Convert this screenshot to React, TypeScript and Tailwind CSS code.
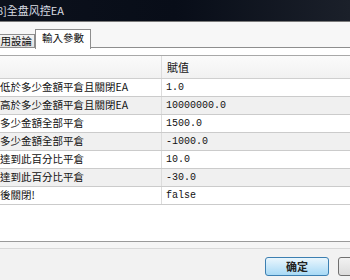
import React from "react";

const rows: { name: string; value: string }[] = [
  { name: "低於多少金額平倉且關閉EA", value: "1.0" },
  { name: "高於多少金額平倉且關閉EA", value: "10000000.0" },
  { name: "多少金額全部平倉", value: "1500.0" },
  { name: "多少金額全部平倉", value: "-1000.0" },
  { name: "達到此百分比平倉", value: "10.0" },
  { name: "達到此百分比平倉", value: "-30.0" },
  { name: "後關閉!", value: "false" },
];

export default function App() {
  return (
    <div
      className="w-[350px] h-[280px] overflow-hidden flex flex-col bg-[#f0f0f0] text-[#111]"
      style={{ fontFamily: '"Noto Sans CJK TC", "Noto Sans CJK SC", sans-serif' }}
    >
      {/* title bar */}
      <div className="h-[22px] shrink-0 flex items-center bg-gradient-to-r from-[#0c111c] via-[#080d18] to-[#1b202a] border-b border-[#7a7a7a]">
        <span className="ml-[-3px] text-[11px] leading-none text-[#d9dde3]">8]全盘风控EA</span>
      </div>
      {/* tab strip */}
      <div className="h-[26px] shrink-0 flex items-end bg-[#f7f7f7]">
        <div className="h-[14px] w-[35px] shrink-0 overflow-hidden flex items-center justify-end pr-[2px] bg-gradient-to-b from-[#f4f4f4] to-[#e2e2e2] border-t border-r border-[#8e8e8e] border-b">
          <span className="text-[10.5px] leading-none whitespace-nowrap">常用設論</span>
        </div>
        <div className="h-[20px] w-[56px] shrink-0 flex items-start justify-center pt-[3px] bg-white border-t border-l border-r border-[#8e8e8e] relative z-10 mb-[-1px]">
          <span className="text-[10.5px] leading-none">輸入參數</span>
        </div>
        <div className="flex-1 border-b border-[#8e8e8e]" />
      </div>
      {/* panel */}
      <div className="h-[193px] shrink-0 bg-white pt-[7px] flex flex-col">
        <div className="border-t border-[#a8a8a8]">
          <div className="h-[23px] flex bg-gradient-to-b from-[#fbfbfb] to-[#f1f1f1] border-b border-[#cfcfcf]">
            <div className="w-[162px] border-r border-[#dcdcdc]" />
            <div className="flex-1 flex items-center pl-[5px] text-[11px] leading-none">賦值</div>
          </div>
          {rows.map((r, i) => (
            <div
              key={i}
              className={`h-[18px] flex border-b border-[#cbcbcb] ${i % 2 === 1 ? "bg-[#f0f0f0]" : "bg-white"}`}
            >
              <div className="w-[162px] flex items-center border-r border-[#dcdcdc] overflow-hidden whitespace-nowrap text-[10.5px] leading-none pl-0">
                {r.name}
              </div>
              <div
                className="flex-1 flex items-center pl-[4px] text-[10px] leading-none"
                style={{ fontFamily: '"Liberation Mono", monospace' }}
              >
                {r.value}
              </div>
            </div>
          ))}
        </div>
      </div>
      {/* bottom */}
      <div className="flex-1 border-t border-[#9a9a9a] flex flex-col">
        <div className="h-[7px] bg-[#f5f5f5] border-b border-[#d8d8d8]" />
        <div className="flex-1 flex items-start justify-end pt-[8px] gap-[9px] bg-[#f2f2f2]">
          <div className="w-[64px] h-[19px] shrink-0 rounded-[3px] border border-[#3c7fb1] bg-gradient-to-b from-[#eaf6fd] to-[#a7d9f5] flex items-center justify-center">
            <span className="text-[11px] leading-none font-bold text-[#222]" style={{ fontFamily: '"Noto Sans CJK SC", sans-serif' }}>确定</span>
          </div>
          <div className="w-[64px] h-[19px] shrink-0 mr-[-52px] rounded-[3px] border border-[#707070] bg-gradient-to-b from-[#f2f2f2] to-[#dcdcdc]" />
        </div>
      </div>
    </div>
  );
}
